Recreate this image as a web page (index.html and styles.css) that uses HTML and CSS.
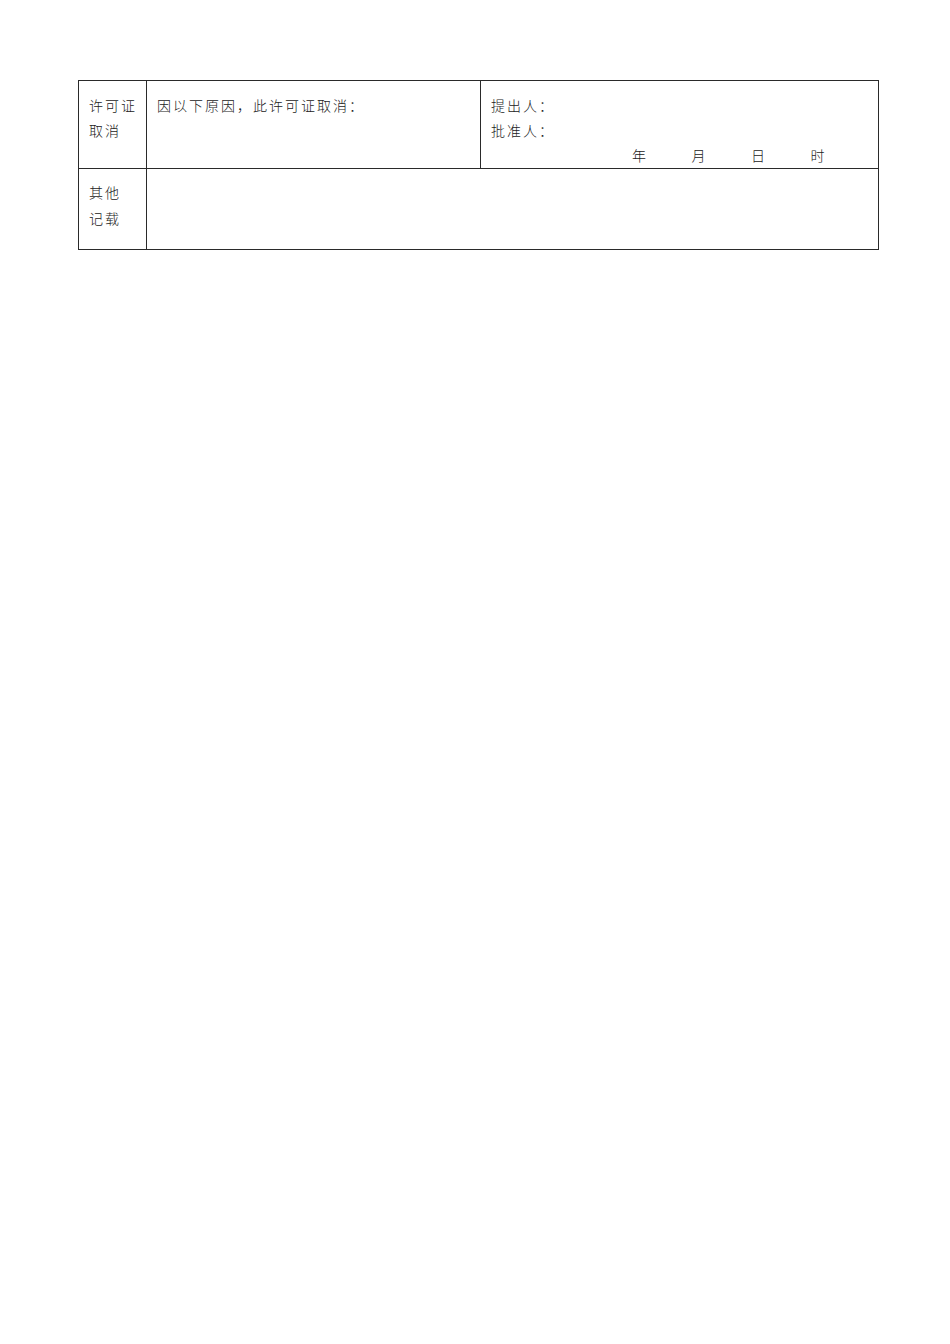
FILE: index.html
```html
<!DOCTYPE html>
<html lang="zh-CN">
<head>
    <meta charset="UTF-8">
    <title>许可证取消</title>
    <link rel="stylesheet" href="styles.css">
</head>
<body>
    <div class="page">
        <table class="permit-table">
            <colgroup>
                <col class="col-label">
                <col class="col-reason">
                <col class="col-sign">
            </colgroup>
            <tr class="row-cancel">
                <td class="label">许可证<br>取消</td>
                <td>因以下原因，此许可证取消：</td>
                <td>
                    <div>提出人：</div>
                    <div>批准人：</div>
                    <div class="date-line">
                        <span>年</span>
                        <span>月</span>
                        <span>日</span>
                        <span>时</span>
                    </div>
                </td>
            </tr>
            <tr class="row-other">
                <td class="label">其他<br>记载</td>
                <td colspan="2"></td>
            </tr>
        </table>
    </div>
</body>
</html>
```

FILE: styles.css
```css
body {
    margin: 0;
    background: #fff;
    color: #222;
    font-family: "Noto Sans CJK SC", "Liberation Serif", serif;
}

.page {
    padding: 80px 0 0 78px;
}

.permit-table {
    border-collapse: collapse;
    table-layout: fixed;
    width: 800px;
    font-size: 14px;
    letter-spacing: 2px;
}

.col-label { width: 68px; }
.col-reason { width: 334px; }
.col-sign { width: 398px; }

.permit-table td {
    border: 1px solid #2a2a2a;
    padding: 12px 8px 0 10px;
    vertical-align: top;
    line-height: 25px;
    font-weight: 300;
}

.row-cancel td {
    height: 75px;
}

.row-other td {
    height: 70px;
    padding-top: 10px;
    line-height: 26px;
}

.date-line {
    display: flex;
    padding-left: 141px;
}

.date-line span {
    width: 62px;
}
```
